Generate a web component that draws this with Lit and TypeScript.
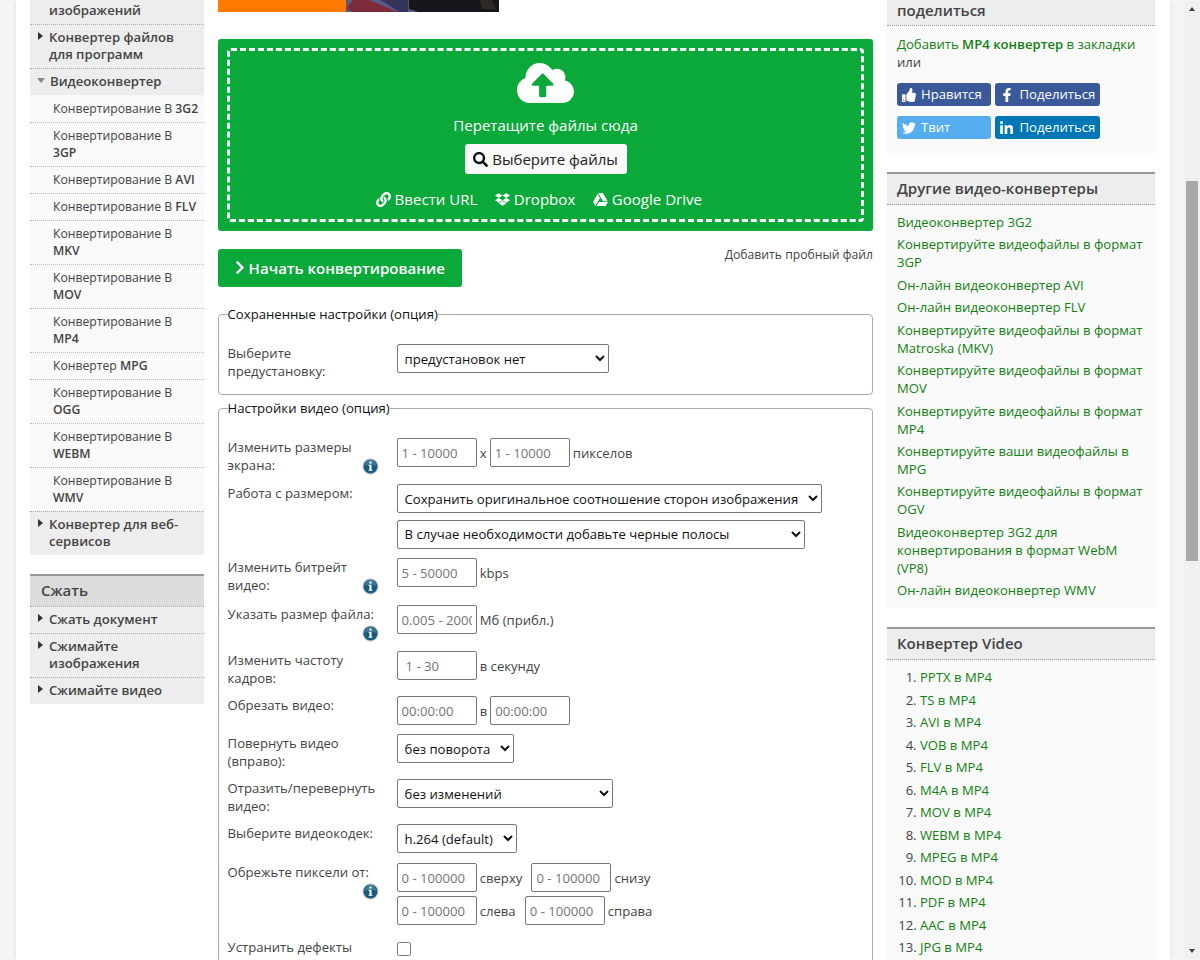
import { LitElement, html, css, svg, nothing } from "lit";
import { customElement } from "lit/decorators.js";

const icon = (cls: string, box: string, d: string) =>
  html`<svg class=${cls} viewBox=${box} fill="currentColor" aria-hidden="true"><path d=${d} /></svg>`;

const CLOUD = "M537.6 226.6c4.1-10.7 6.4-22.4 6.4-34.6 0-53-43-96-96-96-19.7 0-38.1 6-53.3 16.2C367 64.2 315.3 32 256 32c-88.4 0-160 71.6-160 160 0 2.7.1 5.4.2 8.1C40.2 219.8 0 273.2 0 336c0 79.5 64.5 144 144 144h368c70.7 0 128-57.3 128-128 0-61.900-44-113.600-102.400-125.400zM393.400 288H328v112c0 8.800-7.200 16-16 16h-48c-8.800 0-16-7.200-16-16V288h-65.400c-14.300 0-21.400-17.200-11.300-27.300l105.400-105.400c6.200-6.200 16.400-6.200 22.600 0l105.400 105.400c10.100 10.100 2.900 27.300-11.300 27.300z";
const SEARCH = "M505 442.700L405.300 343c-4.500-4.500-10.600-7-17-7H372c27.600-35.300 44-79.700 44-128C416 93.100 322.900 0 208 0S0 93.100 0 208s93.100 208 208 208c48.300 0 92.700-16.400 128-44v16.300c0 6.400 2.500 12.500 7 17l99.700 99.700c9.400 9.400 24.600 9.400 33.900 0l28.300-28.300c9.400-9.400 9.400-24.600.1-34zM208 336c-70.700 0-128-57.200-128-128 0-70.700 57.200-128 128-128 70.700 0 128 57.200 128 128 0 70.700-57.200 128-128 128z";
const LINK = "M326.612 185.391c59.747 59.809 58.927 155.698.36 214.590-.11.120-.240.250-.360.370l-67.200 67.200c-59.270 59.270-155.699 59.262-214.960 0-59.270-59.260-59.270-155.700 0-214.960l37.106-37.106c9.840-9.840 26.786-3.300 27.294 10.606.648 17.722 3.826 35.527 9.690 52.721 1.986 5.822.567 12.262-3.783 16.612l-13.087 13.087c-28.026 28.026-28.905 73.660-1.155 101.960 28.024 28.579 74.086 28.749 102.325.510l67.200-67.190c28.191-28.191 28.073-73.757 0-101.830-3.701-3.694-7.429-6.564-10.341-8.569a16.037 16.037 0 0 1-6.947-12.606c-.396-10.567 3.348-21.456 11.698-29.806l21.054-21.055c5.521-5.521 14.182-6.199 20.584-1.731a152.482 152.482 0 0 1 20.522 17.197zM467.547 44.449c-59.261-59.262-155.690-59.270-214.960 0l-67.200 67.200c-.120.120-.250.250-.360.370-58.566 58.892-59.387 154.781.360 214.590a152.454 152.454 0 0 0 20.521 17.196c6.402 4.468 15.064 3.789 20.584-1.731l21.054-21.055c8.350-8.350 12.094-19.239 11.698-29.806a16.037 16.037 0 0 0-6.947-12.606c-2.912-2.005-6.640-4.875-10.341-8.569-28.073-28.073-28.191-73.639 0-101.830l67.200-67.190c28.239-28.239 74.300-28.069 102.325.510 27.750 28.300 26.872 73.934-1.155 101.960l-13.087 13.087c-4.350 4.350-5.769 10.790-3.783 16.612 5.864 17.194 9.042 34.999 9.690 52.721.509 13.906 17.454 20.446 27.294 10.606l37.106-37.106c59.271-59.259 59.271-155.699.001-214.959z";
const DROPBOX = "M264.400 116.300l-132 84.300 132 84.300-132 84.300L0 284.100l132.300-84.300L0 116.300 132.300 32l132.100 84.300zM131.600 395.700l132-84.300 132 84.300-132 84.300-132-84.300zm132.800-111.600l132-84.300-132-83.600L395.700 32 528 116.300l-132.300 84.300L528 284.800l-132.300 84.300-131.300-85z";
const DRIVE = "M339 314.900L175.400 32h161.200l163.600 282.900H339zm-137.500 23.600L120.900 480h310.500L512 338.500H201.500zM154.100 67.400L0 338.500 80.600 480 237 208.800 154.100 67.400z";
const CHEVRON = "M285.476 272.971L91.132 467.314c-9.373 9.373-24.569 9.373-33.941 0l-22.667-22.667c-9.357-9.357-9.375-24.522-.040-33.901L188.505 256 34.484 101.255c-9.335-9.379-9.317-24.544.040-33.901l22.667-22.667c9.373-9.373 24.569-9.373 33.941 0L285.475 239.030c9.373 9.372 9.373 24.568.001 33.941z";
const THUMB = "M104 224H24c-13.255 0-24 10.745-24 24v240c0 13.255 10.745 24 24 24h80c13.255 0 24-10.745 24-24V248c0-13.255-10.745-24-24-24zM64 472c-13.255 0-24-10.745-24-24s10.745-24 24-24 24 10.745 24 24-10.745 24-24 24zM384 81.452c0 42.416-25.970 66.208-33.277 94.548h101.723c33.397 0 59.397 27.746 59.553 58.098.084 17.938-7.546 37.249-19.439 49.197l-.110.110c9.836 23.337 8.237 56.037-9.308 79.469 8.681 25.895-.069 57.704-16.382 74.757 4.298 17.598 2.244 32.575-6.148 44.632C440.202 511.587 389.616 512 346.839 512l-2.845-.001c-48.287-.017-87.806-17.598-119.560-31.725-15.957-7.099-36.821-15.887-52.651-16.178-6.540-.120-11.783-5.457-11.783-11.998v-213.770c0-3.200 1.282-6.271 3.558-8.521 39.614-39.144 56.648-80.587 89.117-113.111 14.804-14.832 20.188-37.236 25.393-58.902C282.515 39.293 291.817 0 312 0c24 0 72 8 72 81.452z";
const FB = "M279.140 288l14.220-92.660h-88.910v-60.130c0-25.350 12.420-50.060 52.240-50.060h40.420V6.260S260.430 0 225.360 0c-73.220 0-121.080 44.380-121.080 124.720v70.620H22.890V288h81.390v224h100.170V288z";
const TW = "M459.370 151.716c.325 4.548.325 9.097.325 13.645 0 138.720-105.583 298.558-298.558 298.558-59.452 0-114.680-17.219-161.137-47.106 8.447.974 16.568 1.299 25.340 1.299 49.055 0 94.213-16.568 130.274-44.832-46.132-.975-84.792-31.188-98.112-72.772 6.498.974 12.995 1.624 19.818 1.624 9.421 0 18.843-1.300 27.614-3.573-48.081-9.747-84.143-51.980-84.143-102.985v-1.299c13.969 7.797 30.214 12.670 47.431 13.319-28.264-18.843-46.781-51.005-46.781-87.391 0-19.492 5.197-37.360 14.294-52.954 51.655 63.675 129.300 105.258 216.365 109.807-1.624-7.797-2.599-15.918-2.599-24.040 0-57.828 46.782-104.934 104.934-104.934 30.213 0 57.502 12.670 76.670 33.137 23.715-4.548 46.456-13.320 66.599-25.340-7.798 24.366-24.366 44.833-46.132 57.827 21.117-2.273 41.584-8.122 60.426-16.243-14.292 20.791-32.161 39.308-52.628 54.253z";
const LI = "M100.280 448H7.400V148.900h92.880zM53.790 108.100C24.090 108.100 0 83.500 0 53.800a53.790 53.790 0 0 1 107.580 0c0 29.700-24.100 54.300-53.790 54.300zM447.900 448h-92.680V302.400c0-34.700-.7-79.200-48.290-79.200-48.290 0-55.690 37.700-55.690 76.700V448h-92.780V148.900h89.080v40.800h1.300c12.400-23.500 42.690-48.300 87.880-48.300 94 0 111.280 61.900 111.280 142.300V448z";

const box = "0 0 512 512";

@customElement("side-nav")
class SideNav extends LitElement {
  static styles = css`
    :host { display: block; width: 173.500px; font-size: 13.150px; line-height: 17px; color: #444; white-space: nowrap; }
    .item { display: block; background: #ededed; padding: 4px 10px 5px 19px; border-top: 1px dotted #aaa; font-weight: 600; position: relative; }
    .item::before { content: ""; position: absolute; left: 8px; top: 7px; border-left: 5px solid #333; border-top: 4px solid transparent; border-bottom: 4px solid transparent; }
    .item.open { padding-left: 20px; }
    .item.open::before { left: 7px; top: 9px; border: 4px solid transparent; border-top: 5px solid #888; border-bottom: 0; }
    .item.first { border-top: 0; padding-top: 0; height: 19px; display: flex; flex-direction: column; justify-content: flex-end; }
    .item.first::before { content: none; }
    .sub { display: block; background: #f9f9f9; padding: 4px 0 5px 23px; border-top: 1px dotted #bbb; font-size: 12.200px; }
    .sub.top { border-top: 0; padding-top: 5px; }
    b { font-weight: 600; }
    .head { background: #dcdcdc; border-top: 2px solid #999; margin-top: 19px; height: 30px; line-height: 29px; padding-left: 11px; font-size: 15px; font-weight: 600; }
  `;
  subs: string[][] = [["3G2"], ["3GP", "2"], ["AVI"], ["FLV"], ["MKV", "2"], ["MOV", "2"], ["MP4", "2"], ["MPG"], ["OGG", "2"], ["WEBM", "2"], ["WMV", "2"]];
  render() {
    return html`
      <a class="item first"><span>изображений</span></a>
      <a class="item">Конвертер файлов<br />для программ</a>
      <a class="item open">Видеоконвертер</a>
      ${this.subs.map(([s, wrap], i) => html`<a class="sub ${i ? "" : "top"}">${s === "MPG" ? "Конвертер" : "Конвертирование В"} ${wrap ? html`<br />` : nothing}<b>${s}</b></a>`)}
      <a class="item">Конвертер для веб-<br />сервисов</a>
      <div class="head">Сжать</div>
      <a class="item">Сжать документ</a>
      <a class="item">Сжимайте<br />изображения</a>
      <a class="item">Сжимайте видео</a>
    `;
  }
}

@customElement("drop-zone")
class DropZone extends LitElement {
  static styles = css`
    :host { display: block; background: #0ba93a; border-radius: 3px; padding: 9.500px 9px 9px 9.500px; height: 174px; color: #fff; font-size: 15.050px; line-height: 20px; }
    .dash { box-sizing: border-box; height: 174px; border: 3px dashed #fff; border-radius: 4px; display: flex; flex-direction: column; align-items: center; }
    .cloud { width: 57px; height: 46px; margin-top: 9px; }
    .drag { margin-top: 9px; }
    .pick { margin-top: 9px; height: 30px; width: 162px; border-radius: 3px; background: #f9f9f9; color: #222; display: flex; align-items: center; justify-content: center; gap: 4px; }
    .pick .ic { color: #111; }
    .ic { width: 15px; height: 15px; flex: none; }
    .src { display: flex; gap: 18px; margin: 15px 13px 0 0; }
    .src span { display: flex; align-items: center; gap: 3.500px; }
  `;
  render() {
    return html`<div class="dash">
      ${icon("cloud", "0 0 640 512", CLOUD)}
      <div class="drag">Перетащите файлы сюда</div>
      <div class="pick">${icon("ic", box, SEARCH)}<span>Выберите файлы</span></div>
      <div class="src">
        <span>${icon("ic", box, LINK)}Ввести URL</span>
        <span>${icon("ic", "0 0 528 512", DROPBOX)}Dropbox</span>
        <span>${icon("ic", box, DRIVE)}Google Drive</span>
      </div>
    </div>`;
  }
}

type Part = { t?: string; ph?: string; sel?: string; w?: number; check?: boolean; indent?: boolean; ml?: number };
type Row = { h: number; label: string[]; info?: boolean; lines: Part[][]; gap?: number };

const PRESET: Row[] = [{ h: 50, label: ["Выберите", "предустановку:"], lines: [[{ sel: "предустановок нет", w: 212 }]] }];
const VIDEO: Row[] = [
  { h: 46, label: ["Изменить размеры", "экрана:"], info: true, lines: [[{ ph: "1 - 10000" }, { t: "x" }, { ph: "1 - 10000" }, { t: "пикселов" }]] },
  { h: 74, label: ["Работа с размером:"], gap: 6.5, lines: [[{ sel: "Сохранить оригинальное соотношение сторон изображения", w: 425 }], [{ sel: "В случае необходимости добавьте черные полосы", w: 408 }]] },
  { h: 47, label: ["Изменить битрейт", "видео:"], info: true, lines: [[{ ph: "5 - 50000" }, { t: "kbps" }]] },
  { h: 46, label: ["Указать размер файла:", ""], info: true, lines: [[{ ph: "0.005 - 2000" }, { t: "Мб (прибл.)" }]] },
  { h: 45, label: ["Изменить частоту", "кадров:"], lines: [[{ ph: "1 - 30", indent: true }, { t: "в секунду" }]] },
  { h: 38, label: ["Обрезать видео:"], lines: [[{ ph: "00:00:00" }, { t: "в" }, { ph: "00:00:00" }]] },
  { h: 45, label: ["Повернуть видео", "(вправо):"], lines: [[{ sel: "без поворота", w: 117 }]] },
  { h: 45, label: ["Отразить/перевернуть", "видео:"], lines: [[{ sel: "без изменений", w: 216 }]] },
  { h: 39, label: ["Выберите видеокодек:"], lines: [[{ sel: "h.264 (default)", w: 120 }]] },
  { h: 75, label: ["Обрежьте пиксели от:", ""], info: true, gap: 4, lines: [[{ ph: "0 - 100000" }, { t: "сверху" }, { ph: "0 - 100000", ml: 6 }, { t: "снизу" }], [{ ph: "0 - 100000" }, { t: "слева" }, { ph: "0 - 100000", ml: 6 }, { t: "справа" }]] },
  { h: 40, label: ["Устранить дефекты"], lines: [[{ check: true }]] },
];

@customElement("option-rows")
class OptionRows extends LitElement {
  static properties = { rows: { attribute: false }, legend: {} };
  declare rows: Row[];
  declare legend: string;
  static styles = css`
    :host { display: block; }
    fieldset { margin: 0; padding: 0 9px; border: 1px solid #aaa; border-radius: 4px; min-width: 0; }
    legend { padding: 0; color: #111; line-height: 18px; height: 18px; font-size: 13.150px; }
    .rows { padding-top: 21px; }
    .row { display: grid; grid-template-columns: 151px 1fr; column-gap: 18px; }
    .label { position: relative; align-self: start; min-height: 18px; white-space: nowrap; }
    .label span { display: block; height: 18px; }
    .info { position: absolute; right: 0; bottom: -0.500px; width: 17px; height: 17px; }
    .ctl { display: flex; flex-direction: column; align-items: flex-start; }
    .line { display: flex; align-items: center; gap: 3.100px; height: 29px; }
    input, select { box-sizing: border-box; height: 29px; font: inherit; border: 1px solid #767676; border-radius: 2px; background-color: #fff; margin: 0; }
    input { width: 80px; padding: 1px 4px; }
    input.ind { padding-left: 8px; }
    input::placeholder { color: #757575; opacity: 1; }
    select { color: #111; padding: 0 3px; }
    .check { width: 14px; height: 14px; border-radius: 3px; }
    .line.short { height: 22px; }
  `;
  part_(p: Part) {
    if (p.sel) return html`<select style="width:${p.w}px"><option>${p.sel}</option></select>`;
    if (p.ph) return html`<input class=${p.indent ? "ind" : ""} placeholder=${p.ph} style=${p.ml ? `margin-left:${p.ml}px` : ""} />`;
    if (p.check) return html`<input class="check" type="checkbox" />`;
    return html`<span>${p.t}</span>`;
  }
  render() {
    return html`<fieldset><legend>${this.legend}</legend><div class="rows">
      ${this.rows.map((r) => html`<div class="row" style="height:${r.h}px">
        <div class="label">${r.label.map((l) => html`<span>${l}</span>`)}
          ${r.info ? html`<svg class="info" viewBox="0 0 17 17"><circle cx="8.5" cy="8.5" r="8.200" fill="#d0d0d0" /><circle cx="8.5" cy="8.5" r="7" fill="#175a7d" /><path d="M2.500 8a6 6 0 0 1 12 0q-6-3-12 0z" fill="#3c7897" /><path d="M7.500 3.500h2v2h-2zM6.500 6.700h3v5h1v1h-4v-1h1v-4h-1z" fill="#fff" /></svg>` : nothing}
        </div>
        <div class="ctl" style="gap:${r.gap ?? 0}px">${r.lines.map((l) => html`<div class="line ${l[0].check ? "short" : ""}">${l.map((p) => this.part_(p))}</div>`)}</div>
      </div>`)}
    </div></fieldset>`;
  }
}

@customElement("side-info")
class SideInfo extends LitElement {
  static styles = css`
    :host { display: block; width: 268px; line-height: 17.900px; font-size: 13.120px; }
    .card { background: #f9f9f9; margin-bottom: 19px; }
    .head { box-sizing: border-box; background: #ededed; border-top: 2px solid #999; border-bottom: 1px dotted #999; height: 33px; line-height: 29px; padding-left: 10px; font-size: 15px; font-weight: 600; color: #444; }
    .head.cut { border-top: 0; height: 26px; line-height: 20px; }
    .share { height: 127px; box-sizing: border-box; padding: 10px 10px 0; }
    .g { color: #138013; }
    b { font-weight: 600; }
    .btns { display: grid; grid-template-columns: 94px 104.500px; gap: 9.500px 4.500px; margin-top: 11px; }
    .btn { height: 23.500px; border-radius: 3px; color: #fff; display: flex; align-items: center; padding-left: 5px; gap: 5px; font-size: 13.150px; background: #3b5998; }
    .ic { width: 14px; height: 14px; }
    .btn.li .ic { width: 13px; height: 13px; margin-right: 1px; }
    .tw { background: #55acee; }
    .li { background: #0077b5; }
    .list { padding: 9px 5px 3px 10px; }
    .list div, .num li { margin-bottom: 4.580px; }
    .num { margin: 0; padding: 9.700px 0 0 33px; height: 310px; }
  `;
  links = [["Видеоконвертер 3G2"], ["Конвертируйте видеофайлы в формат", "3GP"], ["Он-лайн видеоконвертер AVI"], ["Он-лайн видеоконвертер FLV"], ["Конвертируйте видеофайлы в формат", "Matroska (MKV)"], ["Конвертируйте видеофайлы в формат", "MOV"], ["Конвертируйте видеофайлы в формат", "MP4"], ["Конвертируйте ваши видеофайлы в", "MPG"], ["Конвертируйте видеофайлы в формат", "OGV"], ["Видеоконвертер 3G2 для", "конвертирования в формат WebM", "(VP8)"], ["Он-лайн видеоконвертер WMV"]];
  formats = ["PPTX", "TS", "AVI", "VOB", "FLV", "M4A", "MOV", "WEBM", "MPEG", "MOD", "PDF", "AAC", "JPG"];
  render() {
    return html`
      <div class="card"><div class="head cut">поделиться</div><div class="share">
        <span class="g">Добавить <b>MP4 конвертер</b> в закладки</span><br />или
        <div class="btns">
          <span class="btn">${icon("ic", box, THUMB)}Нравится</span>
          <span class="btn">${icon("ic", "-96 0 512 512", FB)}Поделиться</span>
          <span class="btn tw">${icon("ic", box, TW)}Твит</span>
          <span class="btn li">${icon("ic", "0 0 448 448", LI)}Поделиться</span>
        </div></div></div>
      <div class="card"><div class="head">Другие видео-конвертеры</div>
        <div class="list g">${this.links.map((l) => html`<div>${l.map((t, i) => html`${i ? html`<br />` : nothing}${t}`)}</div>`)}</div></div>
      <div class="card"><div class="head">Конвертер Video</div>
        <ol class="num">${this.formats.map((f) => html`<li><span class="g">${f} в MP4</span></li>`)}</ol></div>
    `;
  }
}

@customElement("app-root")
class AppRoot extends LitElement {
  static styles = css`
    :host { display: flex; width: 1200px; height: 960px; overflow: hidden; background: #f4f4f4; font: 13.120px/18px "Open Sans", "Noto Sans", sans-serif; color: #444; }
    .page { box-sizing: border-box; width: 1153.500px; margin-left: 16px; height: 960px; padding-left: 14px; background: #fff; box-shadow: 0 0 6px rgba(0, 0, 0, .08); display: flex; align-items: flex-start; overflow: hidden; }
    .main { width: 655.400px; flex: none; margin: 0 14px 0 14.100px; display: flex; flex-direction: column; }
    .banner { width: 281px; height: 12px; display: block; }
    drop-zone { margin-top: 26.500px; }
    .start { display: flex; justify-content: space-between; align-items: flex-start; margin-top: 18px; height: 38px; }
    .go { box-sizing: border-box; width: 244.500px; height: 37.500px; background: #0ba93a; color: #fff; border-radius: 3px; font-size: 15.050px; font-weight: 600; display: flex; align-items: center; padding-left: 17px; gap: 4px; }
    .chev { width: 10px; height: 15px; }
    .try { font-size: 12.200px; margin-top: -3.500px; }
    .f1 { margin-top: 18px; height: 94px; }
    .bar { width: 16px; margin-left: auto; background: #f1f1f1; display: flex; flex-direction: column; align-items: center; }
    .up, .down { border: 3.500px solid transparent; }
    .up { border-bottom: 4px solid #444; border-top: 0; margin-top: 6.500px; }
    .down { border-top: 4px solid #444; border-bottom: 0; margin-top: 388px; }
    .thumb { width: 12px; height: 380px; background: #a8a8a8; margin-top: 170px; }
  `;
  render() {
    return html`
      <div class="page">
        <side-nav></side-nav>
        <div class="main">
          <svg class="banner" viewBox="0 0 281 12">${svg`
            <rect width="129" height="12" fill="#ff7a00" />
            <rect x="128.500" width="152.500" height="12" fill="#17161c" />
            <path d="M128.500 0h34l38 12h-72z" fill="#5b5a8a" />
            <path d="M135 0h16l29 12h-45l-6.500-4z" fill="#7d2a3a" />
            <path d="M163 0h28v12h-10z" fill="#34345a" />
            <path d="M190.500 0v12" stroke="#55556a" />
            <path d="M262 0h12l4 9h-14z" fill="#2e2a24" />`}</svg>
          <drop-zone></drop-zone>
          <div class="start"><div class="go">${icon("chev", "0 0 320 512", CHEVRON)}Начать конвертирование</div><span class="try">Добавить пробный файл</span></div>
          <option-rows class="f1" .rows=${PRESET} legend="Сохраненные настройки (опция)"></option-rows>
          <option-rows .rows=${VIDEO} legend="Настройки видео (опция)"></option-rows>
        </div>
        <side-info></side-info>
      </div>
      <div class="bar"><i class="up"></i><i class="thumb"></i><i class="down"></i></div>
    `;
  }
}
